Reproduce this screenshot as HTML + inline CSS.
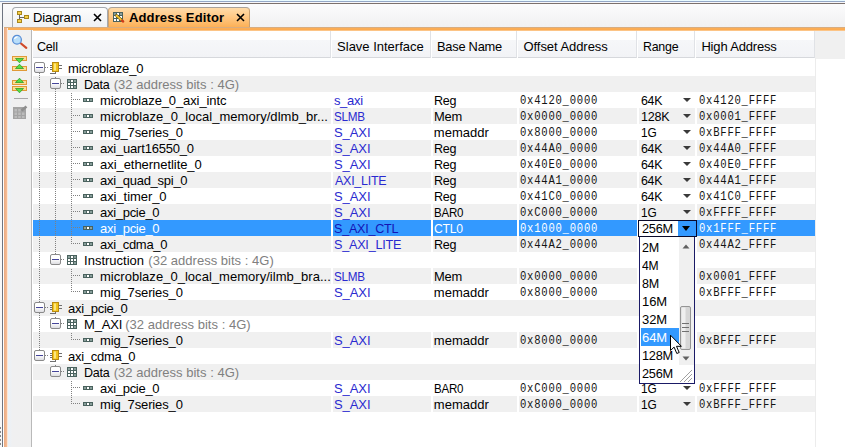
<!DOCTYPE html>
<html lang="en">
<head>
<meta charset="utf-8">
<title>Address Editor</title>
<style>
*{box-sizing:border-box}
html,body{margin:0;padding:0}
body{width:845px;height:447px;overflow:hidden;background:#fff;position:relative;font-family:"Liberation Sans",sans-serif;font-size:13px;color:#000}
.a{position:absolute}
.t{position:absolute;white-space:nowrap;line-height:16px;height:16px;transform-origin:0 0;z-index:1}
.pop{position:absolute;left:0;top:0;width:845px;height:447px;z-index:3}
.bd{font-weight:bold}
.m{font-family:"Liberation Mono",monospace;font-size:12px;color:#141414}
.sel .m{color:#fff}
.b{color:#2a2ad0}
.g{color:#808080}
.row{position:absolute;left:33px;width:782px;height:16px}
.odd{background:#f0f0f0}
.sel{background:#3399ff;color:#fff}
.sel .b{color:#1414b4}
.vl{position:absolute;width:2px;background:#fff}
.hd{position:absolute;top:31px;height:27px;background:linear-gradient(#fff 0,#fff 9px,#f6f7f9 9px,#f2f3f6 26px);border-right:1px solid #e0e2e6;border-bottom:1px solid #d6d8dc}
.dv{position:absolute;width:1px;background-image:linear-gradient(#808080 50%,transparent 50%);background-size:1px 2px}
.dh{position:absolute;height:1px;background-image:linear-gradient(90deg,#808080 50%,transparent 50%);background-size:2px 1px}
.box{position:absolute;width:11px;height:11px;border:1px solid #8a8a8a;border-radius:2px;background:linear-gradient(#fff 0,#fff 45%,#dedee2 100%)}
.box:after{content:"";position:absolute;left:1px;top:4px;width:7px;height:1px;background:#45459a}
.arr{position:absolute;width:0;height:0;border-left:4px solid transparent;border-right:4px solid transparent;border-top:4.5px solid #3a3a3a}
.it{position:absolute;left:641px;width:38px;height:18px}
</style>
</head>
<body>
<div class="a" style="left:0;top:0;width:845px;height:1px;background:#eafbff"></div>
<div class="a" style="left:0;top:1px;width:845px;height:1px;background:#93a7c6"></div>
<div class="a" style="left:0;top:2px;width:845px;height:1px;background:#f6f6fa"></div>
<div class="a" style="left:0;top:3px;width:2px;height:444px;background:#f8f8f8"></div>
<div class="a" style="left:2px;top:3px;width:843px;height:1px;background:#7b706c"></div>
<div class="a" style="left:2px;top:3px;width:1px;height:444px;background:#6e7480"></div>
<div class="a" style="left:0;top:427px;width:1px;height:20px;background-image:linear-gradient(#8a8a8a 50%,transparent 50%);background-size:1px 4px"></div>
<div class="a" style="left:3px;top:4px;width:842px;height:23px;background:linear-gradient(#fbfbfc,#f1f1f2)"></div>
<div class="a" style="left:12px;top:7px;width:96px;height:21px;border:1px solid #a5a9ae;border-bottom:none;border-radius:4px 4px 0 0;background:linear-gradient(#fdfdfd,#eef0f3)"></div>
<svg class="a" style="left:16px;top:10px" width="14" height="14" viewBox="0 0 14 14"><path d="M3.500 4v7M3.500 7.500H9" stroke="#666" fill="none"/><rect x="1.500" y="1.500" width="4" height="3" fill="#f5cf4a" stroke="#a8861c"/><rect x="1.500" y="9.500" width="4" height="3" fill="#f5cf4a" stroke="#a8861c"/><rect x="8.500" y="5.500" width="4" height="3" fill="#f5cf4a" stroke="#a8861c"/></svg>
<span class="t" style="left:33.0px;top:10px;letter-spacing:-0.12px;">Diagram</span>
<svg class="a" style="left:92.500px;top:13px" width="9" height="9" viewBox="0 0 9 9"><path d="M1 1l7 7M8 1l-7 7" stroke="#000" stroke-width="1.600" fill="none"/></svg>
<div class="a" style="left:108px;top:7px;width:142px;height:21px;border:1px solid #c9a070;border-top-color:#a9a29a;border-bottom:none;border-radius:4px 4px 0 0;background:linear-gradient(#ffdcaa,#ffc680 50%,#fcae52)"></div>
<svg class="a" style="left:113px;top:12px" width="12" height="11" viewBox="0 0 12 11"><rect x="0" y="0" width="10" height="10" fill="#4a625e"/><path d="M1 1h2v2h-2zM4 1h2v2h-2zM7 1h2v2h-2zM1 4h2v2h-2zM4 4h2v2h-2zM7 4h2v2h-2zM1 7h2v2h-2zM4 7h2v2h-2zM7 7h2v2h-2z" fill="#fff"/><path d="M1 1h2v2h-2zM7 1h2v2h-2z" fill="#8aa09c"/><path d="M3.500 3.500l5.500 5" stroke="#5a4a10" stroke-width="3" stroke-linecap="round"/><path d="M3.500 3.500l5.500 5" stroke="#f2c430" stroke-width="1.800" stroke-linecap="round"/><path d="M9 8.500l1.200 1.100" stroke="#d03a1a" stroke-width="2.200" stroke-linecap="round"/></svg>
<span class="t bd" style="left:128.9px;top:10px;letter-spacing:0.16px;">Address Editor</span>
<svg class="a" style="left:235.500px;top:13px" width="9" height="9" viewBox="0 0 9 9"><path d="M1 1l7 7M8 1l-7 7" stroke="#000" stroke-width="1.600" fill="none"/></svg>
<div class="a" style="left:4px;top:27px;width:841px;height:4px;background:linear-gradient(#d8ad80 0,#d8ad80 1px,#fcae57 1px,#fbaa50 3px,#fcc486 3px)"></div>
<div class="a" style="left:4px;top:28px;width:4px;height:419px;background:linear-gradient(90deg,#e9a97e 0,#efb189 1px,#f1b690 2px,#f4bf9c 3px,#fde7d6 3px)"></div>
<div class="a" style="left:3px;top:27px;width:1px;height:420px;background:#fdfdfd"></div>
<div class="a" style="left:8px;top:30px;width:24px;height:417px;background:linear-gradient(90deg,#e9f1f8 0,#ecf1f6 2px,#f0f0f1 4px,#f0f0f0 100%);border-right:1px solid #b9b9b9"></div>
<div class="a" style="left:32px;top:30px;width:1px;height:417px;background:#fff"></div>
<svg class="a" style="left:11px;top:33px" width="18" height="18" viewBox="0 0 18 18"><path d="M10 10.500L15.300 14.800" stroke="#d04a2a" stroke-width="2.200" stroke-linecap="round"/><circle cx="6" cy="6.800" r="4.400" fill="#b9defa" stroke="#5b8fd6" stroke-width="1.300"/><path d="M3.500 6a3 3 0 0 1 3-2.200" stroke="#fff" stroke-width="1.200" fill="none"/></svg>
<svg class="a" style="left:11px;top:55px" width="18" height="17" viewBox="0 0 18 17"><rect x="1.500" y="1.500" width="14" height="4" fill="#fcdc92" stroke="#e09a38"/><rect x="1.500" y="11.500" width="14" height="4" fill="#fcdc92" stroke="#e09a38"/><path d="M4.500 3.500h8l-4 4.300z" fill="#55dd44" stroke="#2f9e28" stroke-width="0.800"/><path d="M4.500 13.500h8l-4-4.300z" fill="#55dd44" stroke="#2f9e28" stroke-width="0.800"/></svg>
<svg class="a" style="left:11px;top:77px" width="18" height="18" viewBox="0 0 18 18"><rect x="1.500" y="3.500" width="14" height="4" fill="#fcdc92" stroke="#e09a38"/><rect x="1.500" y="9.500" width="14" height="4" fill="#fcdc92" stroke="#e09a38"/><path d="M4.500 5.500h8l-4-4.300z" fill="#55dd44" stroke="#2f9e28" stroke-width="0.800"/><path d="M4.500 11.500h8l-4 4.300z" fill="#55dd44" stroke="#2f9e28" stroke-width="0.800"/></svg>
<div class="a" style="left:14px;top:98px;width:14px;height:1px;background:#a8a8a8"></div>
<svg class="a" style="left:12px;top:104px" width="17" height="16" viewBox="0 0 17 16"><rect x="1" y="3" width="13" height="12" fill="#a4a4a4"/><path d="M2.500 5h2.500v2.500h-2.500zM6.200 5h2.500v2.500h-2.500zM2.500 8.500h2.500v2.500h-2.500zM6.200 8.500h2.500v2.500h-2.500zM10 8.500h2.500v2.500h-2.500zM2.500 12h2.500v2h-2.500zM6.200 12h2.500v2h-2.500zM10 12h2.500v2h-2.500z" fill="#bcbcbc"/><path d="M9.500 6.500l5-4" stroke="#8e8e8e" stroke-width="2.600"/></svg>
<div class="hd" style="left:33px;width:298px"></div>
<span class="t" style="left:37.4px;top:39px;letter-spacing:-0.25px;transform:scaleX(0.968);">Cell</span>
<div class="hd" style="left:332px;width:99px"></div>
<span class="t" style="left:337.1px;top:39px;letter-spacing:-0.01px;">Slave Interface</span>
<div class="hd" style="left:432px;width:85px"></div>
<span class="t" style="left:437.1px;top:39px;letter-spacing:-0.25px;transform:scaleX(0.988);">Base Name</span>
<div class="hd" style="left:518px;width:119px"></div>
<span class="t" style="left:523.5px;top:39px;letter-spacing:-0.06px;">Offset Address</span>
<div class="hd" style="left:638px;width:57px"></div>
<span class="t" style="left:643.4px;top:39px;letter-spacing:-0.25px;transform:scaleX(0.953);">Range</span>
<div class="hd" style="left:696px;width:119px"></div>
<span class="t" style="left:701.4px;top:39px;letter-spacing:-0.17px;">High Address</span>
<div class="a" style="left:815px;top:31px;width:30px;height:28px;background:#f0f0f0"></div>
<div class="a" style="left:815px;top:58px;width:1px;height:389px;background:#ececec"></div>
<div class="row" style="top:60px"><span class="t" style="left:35.1px;top:1px;letter-spacing:-0.18px;">microblaze_0</span></div>
<div class="row odd" style="top:76px"><span class="t" style="left:51.1px;top:1px;letter-spacing:-0.25px;transform:scaleX(0.962);">Data</span><span class="t g" style="left:80.7px;top:1px;letter-spacing:0.02px;">(32 address bits : 4G)</span></div>
<div class="row" style="top:92px"><span class="t" style="left:67.0px;top:1px;letter-spacing:-0.11px;">microblaze_0_axi_intc</span><span class="t b" style="left:300.9px;top:1px;letter-spacing:-0.28px;">s_axi</span><span class="t" style="left:400.8px;top:1px;letter-spacing:-0.25px;transform:scaleX(0.963);">Reg</span><span class="t m" style="left:487.3px;top:1px;letter-spacing:0.87px;transform:scaleX(0.88);">0x4120_0000</span><span class="t" style="left:607.8px;top:1px;letter-spacing:-0.25px;transform:scaleX(0.949);">64K</span><i class="arr" style="left:649.500px;top:5.500px"></i><span class="t m" style="left:665.5px;top:1px;letter-spacing:0.87px;transform:scaleX(0.88);">0x4120_FFFF</span></div>
<div class="row odd" style="top:108px"><span class="t" style="left:67.0px;top:1px;letter-spacing:0.05px;">microblaze_0_local_memory/dlmb_br...</span><span class="t b" style="left:301.0px;top:1px;letter-spacing:-0.25px;transform:scaleX(0.899);">SLMB</span><span class="t" style="left:400.8px;top:1px;letter-spacing:-0.25px;transform:scaleX(0.992);">Mem</span><span class="t m" style="left:487.3px;top:1px;letter-spacing:0.87px;transform:scaleX(0.88);">0x0000_0000</span><span class="t" style="left:607.7px;top:1px;letter-spacing:-0.25px;transform:scaleX(0.966);">128K</span><i class="arr" style="left:649.500px;top:5.500px"></i><span class="t m" style="left:665.5px;top:1px;letter-spacing:0.87px;transform:scaleX(0.88);">0x0001_FFFF</span></div>
<div class="row" style="top:124px"><span class="t" style="left:67.0px;top:1px;letter-spacing:-0.14px;">mig_7series_0</span><span class="t b" style="left:300.9px;top:1px;letter-spacing:-0.05px;">S_AXI</span><span class="t" style="left:400.8px;top:1px;letter-spacing:0.03px;">memaddr</span><span class="t m" style="left:487.3px;top:1px;letter-spacing:0.87px;transform:scaleX(0.88);">0x8000_0000</span><span class="t" style="left:607.8px;top:1px;letter-spacing:-0.25px;transform:scaleX(0.914);">1G</span><i class="arr" style="left:649.500px;top:5.500px"></i><span class="t m" style="left:665.5px;top:1px;letter-spacing:0.87px;transform:scaleX(0.88);">0xBFFF_FFFF</span></div>
<div class="row odd" style="top:140px"><span class="t" style="left:67.0px;top:1px;letter-spacing:-0.20px;">axi_uart16550_0</span><span class="t b" style="left:300.9px;top:1px;letter-spacing:-0.05px;">S_AXI</span><span class="t" style="left:400.8px;top:1px;letter-spacing:-0.25px;transform:scaleX(0.963);">Reg</span><span class="t m" style="left:487.3px;top:1px;letter-spacing:0.87px;transform:scaleX(0.88);">0x44A0_0000</span><span class="t" style="left:607.8px;top:1px;letter-spacing:-0.25px;transform:scaleX(0.949);">64K</span><i class="arr" style="left:649.500px;top:5.500px"></i><span class="t m" style="left:665.5px;top:1px;letter-spacing:0.87px;transform:scaleX(0.88);">0x44A0_FFFF</span></div>
<div class="row" style="top:156px"><span class="t" style="left:67.0px;top:1px;letter-spacing:-0.05px;">axi_ethernetlite_0</span><span class="t b" style="left:300.9px;top:1px;letter-spacing:-0.05px;">S_AXI</span><span class="t" style="left:400.8px;top:1px;letter-spacing:-0.25px;transform:scaleX(0.963);">Reg</span><span class="t m" style="left:487.3px;top:1px;letter-spacing:0.87px;transform:scaleX(0.88);">0x40E0_0000</span><span class="t" style="left:607.8px;top:1px;letter-spacing:-0.25px;transform:scaleX(0.949);">64K</span><i class="arr" style="left:649.500px;top:5.500px"></i><span class="t m" style="left:665.5px;top:1px;letter-spacing:0.87px;transform:scaleX(0.88);">0x40E0_FFFF</span></div>
<div class="row odd" style="top:172px"><span class="t" style="left:67.0px;top:1px;letter-spacing:-0.27px;">axi_quad_spi_0</span><span class="t b" style="left:301.9px;top:1px;letter-spacing:-0.25px;transform:scaleX(0.958);">AXI_LITE</span><span class="t" style="left:400.8px;top:1px;letter-spacing:-0.25px;transform:scaleX(0.963);">Reg</span><span class="t m" style="left:487.3px;top:1px;letter-spacing:0.87px;transform:scaleX(0.88);">0x44A1_0000</span><span class="t" style="left:607.8px;top:1px;letter-spacing:-0.25px;transform:scaleX(0.949);">64K</span><i class="arr" style="left:649.500px;top:5.500px"></i><span class="t m" style="left:665.5px;top:1px;letter-spacing:0.87px;transform:scaleX(0.88);">0x44A1_FFFF</span></div>
<div class="row" style="top:188px"><span class="t" style="left:67.0px;top:1px;letter-spacing:-0.06px;">axi_timer_0</span><span class="t b" style="left:300.9px;top:1px;letter-spacing:-0.05px;">S_AXI</span><span class="t" style="left:400.8px;top:1px;letter-spacing:-0.25px;transform:scaleX(0.963);">Reg</span><span class="t m" style="left:487.3px;top:1px;letter-spacing:0.87px;transform:scaleX(0.88);">0x41C0_0000</span><span class="t" style="left:607.8px;top:1px;letter-spacing:-0.25px;transform:scaleX(0.949);">64K</span><i class="arr" style="left:649.500px;top:5.500px"></i><span class="t m" style="left:665.5px;top:1px;letter-spacing:0.87px;transform:scaleX(0.88);">0x41C0_FFFF</span></div>
<div class="row odd" style="top:204px"><span class="t" style="left:67.0px;top:1px;letter-spacing:-0.29px;">axi_pcie_0</span><span class="t b" style="left:300.9px;top:1px;letter-spacing:-0.05px;">S_AXI</span><span class="t" style="left:400.9px;top:1px;letter-spacing:-0.25px;transform:scaleX(0.887);">BAR0</span><span class="t m" style="left:487.3px;top:1px;letter-spacing:0.87px;transform:scaleX(0.88);">0xC000_0000</span><span class="t" style="left:607.8px;top:1px;letter-spacing:-0.25px;transform:scaleX(0.914);">1G</span><i class="arr" style="left:649.500px;top:5.500px"></i><span class="t m" style="left:665.5px;top:1px;letter-spacing:0.87px;transform:scaleX(0.88);">0xFFFF_FFFF</span></div>
<div class="row sel" style="top:220px"><span class="t" style="left:67.0px;top:1px;letter-spacing:-0.29px;">axi_pcie_0</span><span class="t b" style="left:300.9px;top:1px;letter-spacing:-0.25px;transform:scaleX(0.968);">S_AXI_CTL</span><span class="t" style="left:400.9px;top:1px;letter-spacing:-0.25px;transform:scaleX(0.937);">CTL0</span><span class="t m" style="left:487.3px;top:1px;letter-spacing:0.87px;transform:scaleX(0.88);">0x1000_0000</span><span class="t m" style="left:665.5px;top:1px;letter-spacing:0.87px;transform:scaleX(0.88);">0x1FFF_FFFF</span></div>
<div class="row odd" style="top:236px"><span class="t" style="left:67.0px;top:1px;letter-spacing:-0.29px;">axi_cdma_0</span><span class="t b" style="left:300.9px;top:1px;letter-spacing:-0.25px;transform:scaleX(0.973);">S_AXI_LITE</span><span class="t" style="left:400.8px;top:1px;letter-spacing:-0.25px;transform:scaleX(0.963);">Reg</span><span class="t m" style="left:487.3px;top:1px;letter-spacing:0.87px;transform:scaleX(0.88);">0x44A2_0000</span><span class="t" style="left:607.8px;top:1px;letter-spacing:-0.25px;transform:scaleX(0.949);">64K</span><i class="arr" style="left:649.500px;top:5.500px"></i><span class="t m" style="left:665.5px;top:1px;letter-spacing:0.87px;transform:scaleX(0.88);">0x44A2_FFFF</span></div>
<div class="row" style="top:252px"><span class="t" style="left:51.1px;top:1px;letter-spacing:-0.01px;">Instruction</span><span class="t g" style="left:115.3px;top:1px;letter-spacing:0.02px;">(32 address bits : 4G)</span></div>
<div class="row odd" style="top:268px"><span class="t" style="left:67.0px;top:1px;letter-spacing:0.03px;">microblaze_0_local_memory/ilmb_bra...</span><span class="t b" style="left:301.0px;top:1px;letter-spacing:-0.25px;transform:scaleX(0.899);">SLMB</span><span class="t" style="left:400.8px;top:1px;letter-spacing:-0.25px;transform:scaleX(0.992);">Mem</span><span class="t m" style="left:487.3px;top:1px;letter-spacing:0.87px;transform:scaleX(0.88);">0x0000_0000</span><span class="t" style="left:607.7px;top:1px;letter-spacing:-0.25px;transform:scaleX(0.966);">128K</span><i class="arr" style="left:649.500px;top:5.500px"></i><span class="t m" style="left:665.5px;top:1px;letter-spacing:0.87px;transform:scaleX(0.88);">0x0001_FFFF</span></div>
<div class="row" style="top:284px"><span class="t" style="left:67.0px;top:1px;letter-spacing:-0.14px;">mig_7series_0</span><span class="t b" style="left:300.9px;top:1px;letter-spacing:-0.05px;">S_AXI</span><span class="t" style="left:400.8px;top:1px;letter-spacing:0.03px;">memaddr</span><span class="t m" style="left:487.3px;top:1px;letter-spacing:0.87px;transform:scaleX(0.88);">0x8000_0000</span><span class="t" style="left:607.8px;top:1px;letter-spacing:-0.25px;transform:scaleX(0.914);">1G</span><i class="arr" style="left:649.500px;top:5.500px"></i><span class="t m" style="left:665.5px;top:1px;letter-spacing:0.87px;transform:scaleX(0.88);">0xBFFF_FFFF</span></div>
<div class="row odd" style="top:300px"><span class="t" style="left:35.1px;top:1px;letter-spacing:-0.29px;">axi_pcie_0</span></div>
<div class="row" style="top:316px"><span class="t" style="left:51.1px;top:1px;letter-spacing:-0.18px;">M_AXI</span><span class="t g" style="left:92.2px;top:1px;letter-spacing:0.02px;">(32 address bits : 4G)</span></div>
<div class="row odd" style="top:332px"><span class="t" style="left:67.0px;top:1px;letter-spacing:-0.14px;">mig_7series_0</span><span class="t b" style="left:300.9px;top:1px;letter-spacing:-0.05px;">S_AXI</span><span class="t" style="left:400.8px;top:1px;letter-spacing:0.03px;">memaddr</span><span class="t m" style="left:487.3px;top:1px;letter-spacing:0.87px;transform:scaleX(0.88);">0x8000_0000</span><span class="t" style="left:607.8px;top:1px;letter-spacing:-0.25px;transform:scaleX(0.914);">1G</span><i class="arr" style="left:649.500px;top:5.500px"></i><span class="t m" style="left:665.5px;top:1px;letter-spacing:0.87px;transform:scaleX(0.88);">0xBFFF_FFFF</span></div>
<div class="row" style="top:348px"><span class="t" style="left:35.1px;top:1px;letter-spacing:-0.29px;">axi_cdma_0</span></div>
<div class="row odd" style="top:364px"><span class="t" style="left:51.1px;top:1px;letter-spacing:-0.25px;transform:scaleX(0.962);">Data</span><span class="t g" style="left:80.7px;top:1px;letter-spacing:0.02px;">(32 address bits : 4G)</span></div>
<div class="row" style="top:380px"><span class="t" style="left:67.0px;top:1px;letter-spacing:-0.29px;">axi_pcie_0</span><span class="t b" style="left:300.9px;top:1px;letter-spacing:-0.05px;">S_AXI</span><span class="t" style="left:400.9px;top:1px;letter-spacing:-0.25px;transform:scaleX(0.887);">BAR0</span><span class="t m" style="left:487.3px;top:1px;letter-spacing:0.87px;transform:scaleX(0.88);">0xC000_0000</span><span class="t" style="left:607.8px;top:1px;letter-spacing:-0.25px;transform:scaleX(0.914);">1G</span><i class="arr" style="left:649.500px;top:5.500px"></i><span class="t m" style="left:665.5px;top:1px;letter-spacing:0.87px;transform:scaleX(0.88);">0xFFFF_FFFF</span></div>
<div class="row odd" style="top:396px"><span class="t" style="left:67.0px;top:1px;letter-spacing:-0.14px;">mig_7series_0</span><span class="t b" style="left:300.9px;top:1px;letter-spacing:-0.05px;">S_AXI</span><span class="t" style="left:400.8px;top:1px;letter-spacing:0.03px;">memaddr</span><span class="t m" style="left:487.3px;top:1px;letter-spacing:0.87px;transform:scaleX(0.88);">0x8000_0000</span><span class="t" style="left:607.8px;top:1px;letter-spacing:-0.25px;transform:scaleX(0.914);">1G</span><i class="arr" style="left:649.500px;top:5.500px"></i><span class="t m" style="left:665.5px;top:1px;letter-spacing:0.87px;transform:scaleX(0.88);">0xBFFF_FFFF</span></div>
<div class="vl" style="left:331px;top:92px;height:160px"></div>
<div class="vl" style="left:431px;top:92px;height:160px"></div>
<div class="vl" style="left:517px;top:92px;height:160px"></div>
<div class="vl" style="left:637px;top:92px;height:160px"></div>
<div class="vl" style="left:695px;top:92px;height:160px"></div>
<div class="vl" style="left:331px;top:268px;height:32px"></div>
<div class="vl" style="left:431px;top:268px;height:32px"></div>
<div class="vl" style="left:517px;top:268px;height:32px"></div>
<div class="vl" style="left:637px;top:268px;height:32px"></div>
<div class="vl" style="left:695px;top:268px;height:32px"></div>
<div class="vl" style="left:331px;top:332px;height:16px"></div>
<div class="vl" style="left:431px;top:332px;height:16px"></div>
<div class="vl" style="left:517px;top:332px;height:16px"></div>
<div class="vl" style="left:637px;top:332px;height:16px"></div>
<div class="vl" style="left:695px;top:332px;height:16px"></div>
<div class="vl" style="left:331px;top:380px;height:32px"></div>
<div class="vl" style="left:431px;top:380px;height:32px"></div>
<div class="vl" style="left:517px;top:380px;height:32px"></div>
<div class="vl" style="left:637px;top:380px;height:32px"></div>
<div class="vl" style="left:695px;top:380px;height:32px"></div>
<div class="box" style="left:34px;top:62px"></div>
<div class="dh" style="left:45px;top:67px;width:4px"></div>
<svg class="a" style="left:50px;top:62px" width="12" height="12" viewBox="0 0 12 12"><path d="M0 3.500h2M0 5.500h2M0 7.500h2M9 3.500h3M9 6.500h3M0 11.500h5.500M5.500 10v2" stroke="#6f6f6f" fill="none"/><rect x="2.500" y="0.500" width="6" height="9" fill="#f3c41c" stroke="#b98a10"/><rect x="4" y="1.500" width="2" height="7" fill="#fbe680"/></svg>
<div class="box" style="left:50px;top:78px"></div>
<div class="dh" style="left:61px;top:83px;width:4px"></div>
<svg class="a" style="left:67px;top:79px" width="10" height="10" viewBox="0 0 10 10"><rect x="0" y="0" width="10" height="10" fill="#4a625e"/><path d="M4 1h2v2h-2zM1 4h2v2h-2zM4 4h2v2h-2zM7 4h2v2h-2zM1 7h2v2h-2zM4 7h2v2h-2z" fill="#fff"/><path d="M1 1h2v2h-2zM7 1h2v2h-2zM7 7h2v2h-2z" fill="#8aa09c"/></svg>
<div class="dh" style="left:73px;top:99px;width:8px"></div>
<svg class="a" style="left:83px;top:98px" width="10" height="4" viewBox="0 0 10 4"><rect x="0" y="0" width="10" height="4" fill="#4a625e"/><rect x="4" y="1" width="2" height="2" fill="#fff"/><path d="M1 1h2v2h-2zM7 1h2v2h-2z" fill="#8aa09c"/></svg>
<div class="dh" style="left:73px;top:115px;width:8px"></div>
<svg class="a" style="left:83px;top:114px" width="10" height="4" viewBox="0 0 10 4"><rect x="0" y="0" width="10" height="4" fill="#4a625e"/><rect x="4" y="1" width="2" height="2" fill="#fff"/><path d="M1 1h2v2h-2zM7 1h2v2h-2z" fill="#8aa09c"/></svg>
<div class="dh" style="left:73px;top:131px;width:8px"></div>
<svg class="a" style="left:83px;top:130px" width="10" height="4" viewBox="0 0 10 4"><rect x="0" y="0" width="10" height="4" fill="#4a625e"/><rect x="4" y="1" width="2" height="2" fill="#fff"/><path d="M1 1h2v2h-2zM7 1h2v2h-2z" fill="#8aa09c"/></svg>
<div class="dh" style="left:73px;top:147px;width:8px"></div>
<svg class="a" style="left:83px;top:146px" width="10" height="4" viewBox="0 0 10 4"><rect x="0" y="0" width="10" height="4" fill="#4a625e"/><rect x="4" y="1" width="2" height="2" fill="#fff"/><path d="M1 1h2v2h-2zM7 1h2v2h-2z" fill="#8aa09c"/></svg>
<div class="dh" style="left:73px;top:163px;width:8px"></div>
<svg class="a" style="left:83px;top:162px" width="10" height="4" viewBox="0 0 10 4"><rect x="0" y="0" width="10" height="4" fill="#4a625e"/><rect x="4" y="1" width="2" height="2" fill="#fff"/><path d="M1 1h2v2h-2zM7 1h2v2h-2z" fill="#8aa09c"/></svg>
<div class="dh" style="left:73px;top:179px;width:8px"></div>
<svg class="a" style="left:83px;top:178px" width="10" height="4" viewBox="0 0 10 4"><rect x="0" y="0" width="10" height="4" fill="#4a625e"/><rect x="4" y="1" width="2" height="2" fill="#fff"/><path d="M1 1h2v2h-2zM7 1h2v2h-2z" fill="#8aa09c"/></svg>
<div class="dh" style="left:73px;top:195px;width:8px"></div>
<svg class="a" style="left:83px;top:194px" width="10" height="4" viewBox="0 0 10 4"><rect x="0" y="0" width="10" height="4" fill="#4a625e"/><rect x="4" y="1" width="2" height="2" fill="#fff"/><path d="M1 1h2v2h-2zM7 1h2v2h-2z" fill="#8aa09c"/></svg>
<div class="dh" style="left:73px;top:211px;width:8px"></div>
<svg class="a" style="left:83px;top:210px" width="10" height="4" viewBox="0 0 10 4"><rect x="0" y="0" width="10" height="4" fill="#4a625e"/><rect x="4" y="1" width="2" height="2" fill="#fff"/><path d="M1 1h2v2h-2zM7 1h2v2h-2z" fill="#8aa09c"/></svg>
<div class="dh" style="left:73px;top:227px;width:8px"></div>
<svg class="a" style="left:83px;top:226px" width="10" height="4" viewBox="0 0 10 4"><rect x="0" y="0" width="10" height="4" fill="#4a625e"/><rect x="4" y="1" width="2" height="2" fill="#fff"/><path d="M1 1h2v2h-2zM7 1h2v2h-2z" fill="#8aa09c"/></svg>
<div class="dh" style="left:73px;top:243px;width:8px"></div>
<svg class="a" style="left:83px;top:242px" width="10" height="4" viewBox="0 0 10 4"><rect x="0" y="0" width="10" height="4" fill="#4a625e"/><rect x="4" y="1" width="2" height="2" fill="#fff"/><path d="M1 1h2v2h-2zM7 1h2v2h-2z" fill="#8aa09c"/></svg>
<div class="box" style="left:50px;top:254px"></div>
<div class="dh" style="left:61px;top:259px;width:4px"></div>
<svg class="a" style="left:67px;top:255px" width="10" height="10" viewBox="0 0 10 10"><rect x="0" y="0" width="10" height="10" fill="#4a625e"/><path d="M4 1h2v2h-2zM1 4h2v2h-2zM4 4h2v2h-2zM7 4h2v2h-2zM1 7h2v2h-2zM4 7h2v2h-2z" fill="#fff"/><path d="M1 1h2v2h-2zM7 1h2v2h-2zM7 7h2v2h-2z" fill="#8aa09c"/></svg>
<div class="dh" style="left:73px;top:275px;width:8px"></div>
<svg class="a" style="left:83px;top:274px" width="10" height="4" viewBox="0 0 10 4"><rect x="0" y="0" width="10" height="4" fill="#4a625e"/><rect x="4" y="1" width="2" height="2" fill="#fff"/><path d="M1 1h2v2h-2zM7 1h2v2h-2z" fill="#8aa09c"/></svg>
<div class="dh" style="left:73px;top:291px;width:8px"></div>
<svg class="a" style="left:83px;top:290px" width="10" height="4" viewBox="0 0 10 4"><rect x="0" y="0" width="10" height="4" fill="#4a625e"/><rect x="4" y="1" width="2" height="2" fill="#fff"/><path d="M1 1h2v2h-2zM7 1h2v2h-2z" fill="#8aa09c"/></svg>
<div class="box" style="left:34px;top:302px"></div>
<div class="dh" style="left:45px;top:307px;width:4px"></div>
<svg class="a" style="left:50px;top:302px" width="12" height="12" viewBox="0 0 12 12"><path d="M0 3.500h2M0 5.500h2M0 7.500h2M9 3.500h3M9 6.500h3M0 11.500h5.500M5.500 10v2" stroke="#6f6f6f" fill="none"/><rect x="2.500" y="0.500" width="6" height="9" fill="#f3c41c" stroke="#b98a10"/><rect x="4" y="1.500" width="2" height="7" fill="#fbe680"/></svg>
<div class="box" style="left:50px;top:318px"></div>
<div class="dh" style="left:61px;top:323px;width:4px"></div>
<svg class="a" style="left:67px;top:319px" width="10" height="10" viewBox="0 0 10 10"><rect x="0" y="0" width="10" height="10" fill="#4a625e"/><path d="M4 1h2v2h-2zM1 4h2v2h-2zM4 4h2v2h-2zM7 4h2v2h-2zM1 7h2v2h-2zM4 7h2v2h-2z" fill="#fff"/><path d="M1 1h2v2h-2zM7 1h2v2h-2zM7 7h2v2h-2z" fill="#8aa09c"/></svg>
<div class="dh" style="left:73px;top:339px;width:8px"></div>
<svg class="a" style="left:83px;top:338px" width="10" height="4" viewBox="0 0 10 4"><rect x="0" y="0" width="10" height="4" fill="#4a625e"/><rect x="4" y="1" width="2" height="2" fill="#fff"/><path d="M1 1h2v2h-2zM7 1h2v2h-2z" fill="#8aa09c"/></svg>
<div class="box" style="left:34px;top:350px"></div>
<div class="dh" style="left:45px;top:355px;width:4px"></div>
<svg class="a" style="left:50px;top:350px" width="12" height="12" viewBox="0 0 12 12"><path d="M0 3.500h2M0 5.500h2M0 7.500h2M9 3.500h3M9 6.500h3M0 11.500h5.500M5.500 10v2" stroke="#6f6f6f" fill="none"/><rect x="2.500" y="0.500" width="6" height="9" fill="#f3c41c" stroke="#b98a10"/><rect x="4" y="1.500" width="2" height="7" fill="#fbe680"/></svg>
<div class="box" style="left:50px;top:366px"></div>
<div class="dh" style="left:61px;top:371px;width:4px"></div>
<svg class="a" style="left:67px;top:367px" width="10" height="10" viewBox="0 0 10 10"><rect x="0" y="0" width="10" height="10" fill="#4a625e"/><path d="M4 1h2v2h-2zM1 4h2v2h-2zM4 4h2v2h-2zM7 4h2v2h-2zM1 7h2v2h-2zM4 7h2v2h-2z" fill="#fff"/><path d="M1 1h2v2h-2zM7 1h2v2h-2zM7 7h2v2h-2z" fill="#8aa09c"/></svg>
<div class="dh" style="left:73px;top:387px;width:8px"></div>
<svg class="a" style="left:83px;top:386px" width="10" height="4" viewBox="0 0 10 4"><rect x="0" y="0" width="10" height="4" fill="#4a625e"/><rect x="4" y="1" width="2" height="2" fill="#fff"/><path d="M1 1h2v2h-2zM7 1h2v2h-2z" fill="#8aa09c"/></svg>
<div class="dh" style="left:73px;top:403px;width:8px"></div>
<svg class="a" style="left:83px;top:402px" width="10" height="4" viewBox="0 0 10 4"><rect x="0" y="0" width="10" height="4" fill="#4a625e"/><rect x="4" y="1" width="2" height="2" fill="#fff"/><path d="M1 1h2v2h-2zM7 1h2v2h-2z" fill="#8aa09c"/></svg>
<div class="dv" style="left:39px;top:73px;height:229px"></div>
<div class="dv" style="left:39px;top:313px;height:37px"></div>
<div class="dv" style="left:55px;top:77px;height:1px"></div>
<div class="dv" style="left:55px;top:89px;height:165px"></div>
<div class="dv" style="left:55px;top:317px;height:1px"></div>
<div class="dv" style="left:55px;top:365px;height:1px"></div>
<div class="dv" style="left:71px;top:93px;height:151px"></div>
<div class="dv" style="left:71px;top:269px;height:23px"></div>
<div class="dv" style="left:71px;top:333px;height:7px"></div>
<div class="dv" style="left:71px;top:381px;height:23px"></div>
<div class="pop">
<div class="a" style="left:638px;top:220px;width:59px;height:17px;border:1px solid #0a0a2a;background:#fff"></div>
<div class="a" style="left:678px;top:221px;width:18px;height:15px;background:#3399ff"></div>
<span class="t" style="left:642.0px;top:221px;letter-spacing:-0.25px;transform:scaleX(0.982);">256M</span>
<i class="arr" style="left:682px;top:226px;border-left-width:4.500px;border-right-width:4.500px;border-top-width:5px;border-top-color:#000"></i>
<div class="a" style="left:639px;top:237px;width:56px;height:147px;border:1px solid #1a1a66;border-top:none;background:#fff"></div>
<div class="a" style="left:679px;top:237px;width:15px;height:128px;background:#f0f0f0"></div>
<span class="t" style="left:642.0px;top:240px;letter-spacing:-0.25px;transform:scaleX(0.965);">2M</span>
<span class="t" style="left:642.3px;top:258px;letter-spacing:-0.25px;transform:scaleX(0.931);">4M</span>
<span class="t" style="left:642.0px;top:276px;letter-spacing:-0.25px;transform:scaleX(0.965);">8M</span>
<span class="t" style="left:642.0px;top:294px;letter-spacing:-0.05px;">16M</span>
<span class="t" style="left:642.0px;top:312px;letter-spacing:-0.05px;">32M</span>
<div class="a" style="left:641px;top:328px;width:38px;height:18px;background:#3399ff"></div>
<span class="t" style="left:642.0px;top:330px;letter-spacing:-0.05px;color:#fff;">64M</span>
<span class="t" style="left:642.0px;top:348px;letter-spacing:-0.25px;transform:scaleX(0.982);">128M</span>
<span class="t" style="left:642.0px;top:366px;letter-spacing:-0.25px;transform:scaleX(0.982);">256M</span>
<svg class="a" style="left:679px;top:238px" width="14" height="146" viewBox="0 0 14 146"><path d="M3.500 10.500l3.500-4l3.500 4z" fill="#606060"/><rect x="1.500" y="68.500" width="10" height="43" rx="1.500" fill="#d6d6d6" stroke="#959595"/><rect x="2.500" y="69.500" width="4" height="41" fill="#efefef"/><path d="M3 85.500h7M3 89.500h7M3 93.500h7" stroke="#707070"/><path d="M3.500 118.500l3.500 4l3.500-4z" fill="#606060"/><path d="M13 132L1 144M13 136L5 144M13 140L9 144" stroke="#a0a0a0" fill="none"/></svg>
<svg class="a" style="left:670px;top:334px" width="14" height="22" viewBox="0 0 14 22"><path d="M0.500 1.200v15.300l3.600-3.400l2.700 6.400l2.400-1l-2.700-6.200h4.900z" fill="#fff" stroke="#000" stroke-width="1"/></svg>
</div>
</body>
</html>
